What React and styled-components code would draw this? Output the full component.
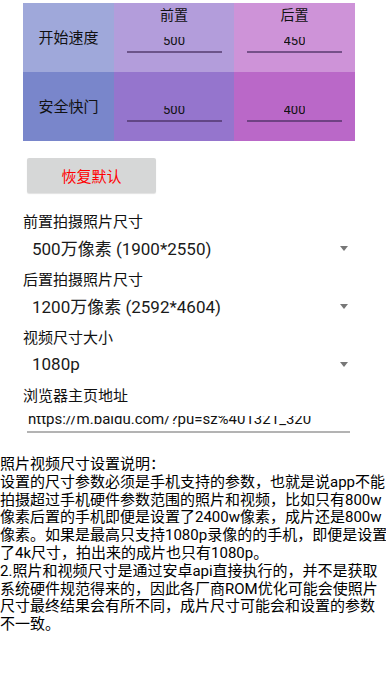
import React from 'react';
import styled, { createGlobalStyle } from 'styled-components';

const GlobalStyle = createGlobalStyle`
    body {
        margin: 0;
        background: #ffffff;
        font-family: Roboto, "Noto Sans CJK SC", sans-serif;
        color: #000;
    }
`;

const Page = styled.div`
    width: 386px;
    padding-top: 3px;
`;

const Grid = styled.div`
    margin-left: 23px;
    width: 332px;
    display: grid;
    grid-template-columns: 91px 120px 121px;
    grid-template-rows: 69px 69px;
`;

const Cell = styled.div`
    background: ${p => p.bg};
    display: flex;
    flex-direction: column;
    align-items: center;
    justify-content: ${p => (p.center ? 'center' : 'flex-start')};
    padding-top: ${p => p.top || 0}px;
    box-sizing: border-box;
`;

const RowLabel = styled.div`
    font-size: 15px;
    line-height: 20px;
    color: #111;
`;

const Header = styled.div`
    font-size: 14px;
    line-height: 18px;
    color: #111;
    margin-bottom: ${p => p.gap}px;
`;

const ValueClip = styled.div`
    height: 10px;
    overflow: hidden;
    display: flex;
    align-items: flex-end;
`;

const ValueText = styled.span`
    font-size: 13px;
    line-height: 13px;
    color: #111;
`;

const Underline = styled.div`
    margin-top: 4px;
    width: ${p => p.w}px;
    height: 2px;
    background: rgba(70, 45, 95, 0.65);
`;

const ResetButton = styled.button`
    margin: 17px 0 0 27px;
    width: 129px;
    height: 35px;
    border: none;
    border-radius: 2px;
    background: #d6d7d7;
    box-shadow: 0 1px 1px rgba(0, 0, 0, 0.12);
    color: #ff0000;
    font-family: Roboto, "Noto Sans CJK SC", sans-serif;
    font-size: 15px;
    padding: 0;
    display: block;
`;

const Form = styled.div`
    padding-left: 23px;
    margin-top: 19px;
`;

const Label = styled.div`
    font-size: 15px;
    line-height: 20px;
    color: #111;
    margin-top: ${p => p.gap || 0}px;
`;

const Spinner = styled.div`
    width: 332px;
    height: 31px;
    box-sizing: border-box;
    padding: 0 7px 0 9px;
    display: flex;
    align-items: center;
    justify-content: space-between;
    font-size: 17px;
    color: #1a1a1a;
`;

const Arrow = styled.span`
    width: 0;
    height: 0;
    border-left: 4.5px solid transparent;
    border-right: 4.5px solid transparent;
    border-top: 5px solid #777;
    margin-top: 2px;
`;

const UrlField = styled.div`
    margin: 10px 0 0 4px;
    width: 323px;
`;

const UrlClip = styled.div`
    height: 11px;
    overflow: hidden;
    display: flex;
    align-items: flex-end;
    padding-left: 1px;
`;

const UrlText = styled.span`
    font-size: 15px;
    line-height: 15px;
    color: #111;
    white-space: nowrap;
`;

const UrlLine = styled.div`
    margin-top: 4px;
    height: 2px;
    background: #b3b3b3;
`;

const Notes = styled.div`
    margin-top: 23px;
    font-size: 15px;
    line-height: 17.8px;
    white-space: nowrap;
    color: #000;
`;

function Edit({ value, w }) {
    return (
        <>
            <ValueClip>
                <ValueText>{value}</ValueText>
            </ValueClip>
            <Underline w={w} />
        </>
    );
}

function Select({ value }) {
    return (
        <Spinner>
            <span>{value}</span>
            <Arrow />
        </Spinner>
    );
}

const notes = [
    '照片视频尺寸设置说明：',
    '设置的尺寸参数必须是手机支持的参数，也就是说app不能',
    '拍摄超过手机硬件参数范围的照片和视频，比如只有800w',
    '像素后置的手机即便是设置了2400w像素，成片还是800w',
    '像素。如果是最高只支持1080p录像的的手机，即便是设置',
    '了4k尺寸，拍出来的成片也只有1080p。',
    '2.照片和视频尺寸是通过安卓api直接执行的，并不是获取',
    '系统硬件规范得来的，因此各厂商ROM优化可能会使照片',
    '尺寸最终结果会有所不同，成片尺寸可能会和设置的参数',
    '不一致。',
];

export default function App() {
    return (
        <Page>
            <GlobalStyle />
            <Grid>
                <Cell bg="#9fa8da" center>
                    <RowLabel>开始速度</RowLabel>
                </Cell>
                <Cell bg="#b39ddb" top={3}>
                    <Header gap={13}>前置</Header>
                    <Edit value="500" w={95} />
                </Cell>
                <Cell bg="#ce93d8" top={3}>
                    <Header gap={13}>后置</Header>
                    <Edit value="450" w={95} />
                </Cell>
                <Cell bg="#7986cb" center>
                    <RowLabel>安全快门</RowLabel>
                </Cell>
                <Cell bg="#9575cd" top={34}>
                    <Edit value="500" w={95} />
                </Cell>
                <Cell bg="#ba68c8" top={34}>
                    <Edit value="400" w={95} />
                </Cell>
            </Grid>

            <ResetButton>恢复默认</ResetButton>

            <Form>
                <Label>前置拍摄照片尺寸</Label>
                <Select value="500万像素 (1900*2550)" />
                <Label gap={7}>后置拍摄照片尺寸</Label>
                <Select value="1200万像素 (2592*4604)" />
                <Label gap={7}>视频尺寸大小</Label>
                <Select value="1080p" />
                <Label gap={7}>浏览器主页地址</Label>
                <UrlField>
                    <UrlClip>
                        <UrlText>https://m.baidu.com/?pu=sz%401321_320</UrlText>
                    </UrlClip>
                    <UrlLine />
                </UrlField>
            </Form>

            <Notes>
                {notes.map((line, i) => (
                    <div key={i}>{line}</div>
                ))}
            </Notes>
        </Page>
    );
}
